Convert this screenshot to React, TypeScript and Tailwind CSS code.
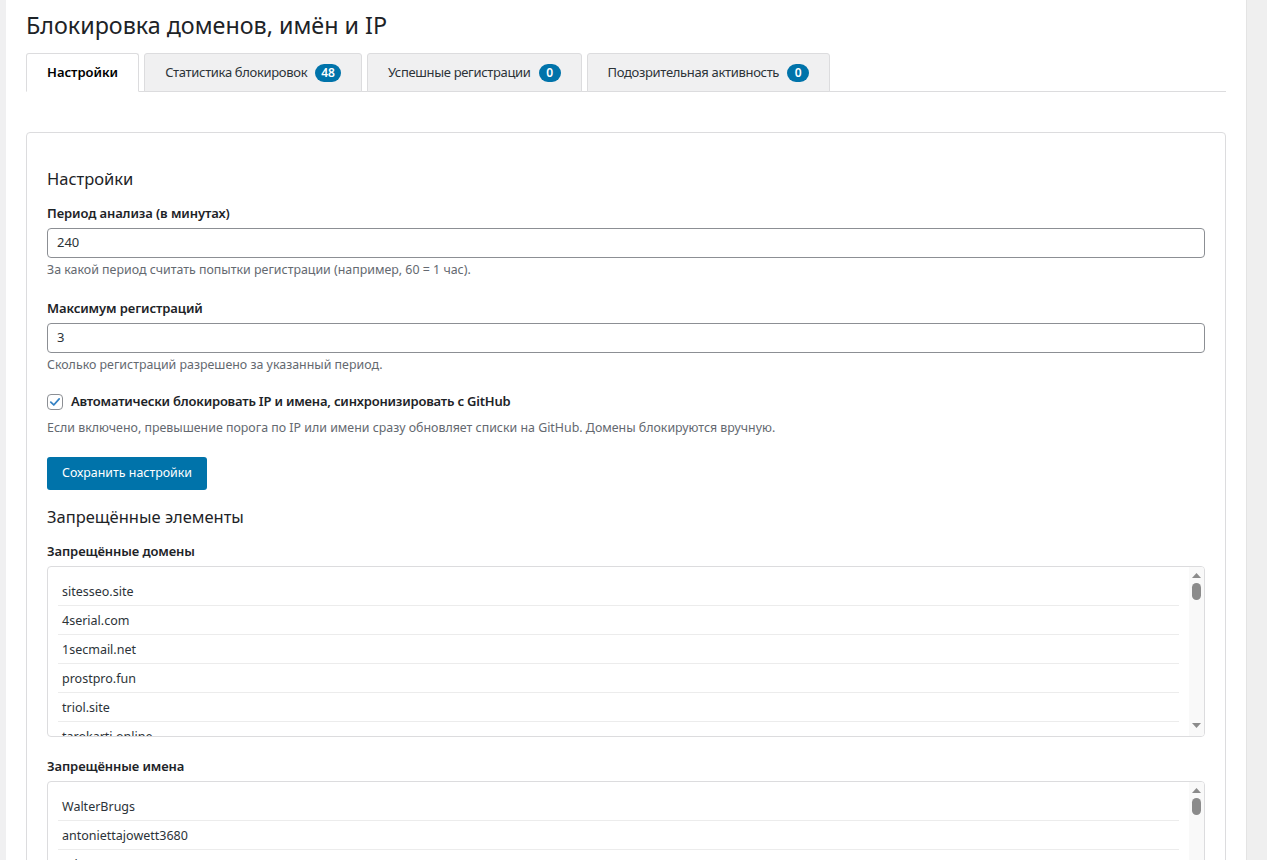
const domains = [
  "sitesseo.site",
  "4serial.com",
  "1secmail.net",
  "prostpro.fun",
  "triol.site",
  "tarokarti.online",
  "mailto.plus",
  "fexpost.com",
  "fexbox.org",
  "rover.info",
];

const names = [
  "WalterBrugs",
  "antoniettajowett3680",
  "robertoxn",
  "JamesHoips",
  "Davidbut",
  "MichaelGop",
  "Charlesfuh",
];

const tabs = [
  { label: "Настройки", active: true },
  { label: "Статистика блокировок", count: 48 },
  { label: "Успешные регистрации", count: 0 },
  { label: "Подозрительная активность", count: 0 },
];

function ListBox({ items }: { items: string[] }) {
  return (
    <div className="mt-[5px] flex h-[171px] overflow-hidden rounded-[4px] border border-[#dcdcde] bg-white">
      <ul className="flex-1 overflow-hidden p-[10px]">
        {items.map((item) => (
          <li
            key={item}
            className="h-[29px] border-b border-[#ececec] pl-[4px] text-[12.5px] leading-[29px] text-[#2c3338]"
          >
            {item}
          </li>
        ))}
      </ul>
      {/* scrollbar */}
      <div className="flex w-[15px] flex-col items-center bg-[#f9f9f9] pt-[6px] pb-[8px]">
        <svg viewBox="0 0 9 5" className="h-[5px] w-[9px]">
          <path d="M0 5 L4.5 0 L9 5 Z" fill="#8b8b8b" />
        </svg>
        <div className="mt-[5px] h-[17px] w-[9px] rounded-full bg-[#8b8b8b]" />
        <div className="flex-1" />
        <svg viewBox="0 0 9 5" className="h-[5px] w-[9px]">
          <path d="M0 0 L9 0 L4.5 5 Z" fill="#8b8b8b" />
        </svg>
      </div>
    </div>
  );
}

export default function App() {
  return (
    <div
      className="flex h-screen overflow-hidden bg-[#f0f0f1] text-[#1d2327]"
      style={{ fontFamily: '"Segoe UI", "Noto Sans", "Open Sans", sans-serif' }}
    >
      <div className="w-[6px] shrink-0 bg-[#f0f0f1]" />
      <main className="flex-1 bg-white px-[20px]">
        <h1 className="mt-[10px] text-[23.3px] leading-[30px] font-normal text-[#1d2327]">
          Блокировка доменов, имён и IP
        </h1>

        <nav className="mt-[13px] flex gap-[5px] border-b border-[#dcdcde]">
          {tabs.map((tab) => (
            <div
              key={tab.label}
              className={
                tab.active
                  ? "-mb-px flex h-[39px] items-center rounded-t-[3px] border border-b-white border-[#dcdcde] bg-white px-[20px] text-[13px] font-semibold text-[#000]"
                  : "-mb-px flex h-[39px] items-center rounded-t-[3px] border border-[#dcdcde] bg-[#f0f0f1] px-[20px] text-[13px] tracking-[-0.33px] text-[#2c3338]"
              }
            >
              {tab.label}
              {tab.count !== undefined && (
                <span className="ml-[8px] inline-flex h-[18px] min-w-[22px] items-center justify-center rounded-full bg-[#0073aa] px-[6px] text-[12px] font-semibold tracking-normal text-white">
                  {tab.count}
                </span>
              )}
            </div>
          ))}
        </nav>

        <section className="mt-[40px] rounded-[4px] border border-[#dcdcde] px-[20px] pt-[34px] pb-[20px]">
          <h2 className="text-[16.5px] leading-[24px] font-normal">Настройки</h2>

          <label className="mt-[12px] block text-[13px] leading-[20px] font-semibold tracking-[-0.1px]">
            Период анализа (в минутах)
          </label>
          <div className="mt-[5px] flex h-[30px] items-center rounded-[4px] border border-[#8c8f94] px-[9px] text-[13px] text-[#2c3338]">
            240
          </div>
          <p className="mt-[3px] text-[12.4px] leading-[18px] text-[#646970]">
            За какой период считать попытки регистрации (например, 60 = 1 час).
          </p>

          <label className="mt-[19px] block text-[13px] leading-[20px] font-semibold tracking-[-0.1px]">
            Максимум регистраций
          </label>
          <div className="mt-[5px] flex h-[30px] items-center rounded-[4px] border border-[#8c8f94] px-[9px] text-[13px] text-[#2c3338]">
            3
          </div>
          <p className="mt-[3px] text-[12.4px] leading-[18px] text-[#646970]">
            Сколько регистраций разрешено за указанный период.
          </p>

          <div className="mt-[18px] flex h-[20px] items-center gap-[8px]">
            <span className="flex h-[16px] w-[16px] items-center justify-center rounded-[4px] border border-[#8c8f94] bg-white">
              <svg viewBox="0 0 16 16" className="h-[14px] w-[14px]">
                <path
                  d="M3.2 8.2 L6.6 11.4 L12.8 4.4"
                  fill="none"
                  stroke="#3582c4"
                  strokeWidth="2"
                  strokeLinecap="round"
                  strokeLinejoin="round"
                />
              </svg>
            </span>
            <span className="text-[13px] font-semibold tracking-[-0.2px]">
              Автоматически блокировать IP и имена, синхронизировать с GitHub
            </span>
          </div>
          <p className="mt-[7px] text-[12.4px] leading-[18px] text-[#646970]">
            Если включено, превышение порога по IP или имени сразу обновляет списки на GitHub. Домены блокируются вручную.
          </p>

          <button className="mt-[20px] h-[33px] w-[160px] rounded-[3px] bg-[#0073aa] text-[12.4px] text-white">
            Сохранить настройки
          </button>

          <h2 className="mt-[15px] text-[16.5px] leading-[24px] font-normal">Запрещённые элементы</h2>

          <label className="mt-[12px] block text-[13px] leading-[20px] font-semibold tracking-[-0.1px]">
            Запрещённые домены
          </label>
          <ListBox items={domains} />

          <label className="mt-[19px] block text-[13px] leading-[20px] font-semibold tracking-[-0.1px]">
            Запрещённые имена
          </label>
          <ListBox items={names} />
        </section>
      </main>
      <div className="w-[21px] shrink-0 border-l border-[#e4e4e4] bg-[#efefef]" />
    </div>
  );
}
